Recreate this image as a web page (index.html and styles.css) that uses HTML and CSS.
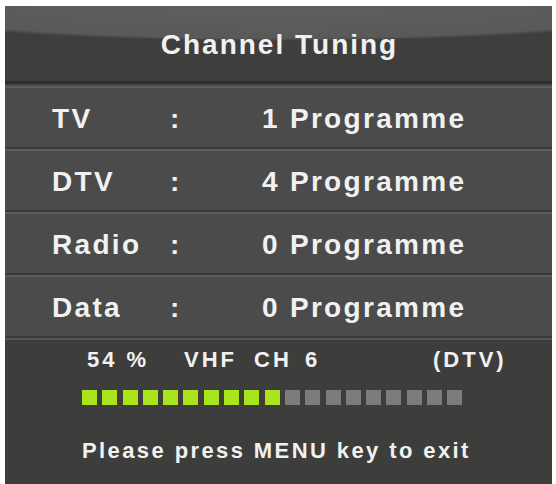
FILE: index.html
```
<!DOCTYPE html>
<html>
<head>
<meta charset="utf-8">
<link rel="stylesheet" href="styles.css">
</head>
<body>
<div class="panel">
  <div class="header"><span class="title">Channel Tuning</span></div>
  <div class="rows">
    <div class="row"><span class="label">TV</span><span class="colon">:</span><span class="value">1 Programme</span></div>
    <div class="row"><span class="label">DTV</span><span class="colon">:</span><span class="value">4 Programme</span></div>
    <div class="row"><span class="label">Radio</span><span class="colon">:</span><span class="value">0 Programme</span></div>
    <div class="row"><span class="label">Data</span><span class="colon">:</span><span class="value">0 Programme</span></div>
  </div>
  <div class="footer">
    <div class="status">
      <span class="s-pct">54 %</span>
      <span class="s-band">VHF</span>
      <span class="s-ch">CH</span>
      <span class="s-num">6</span>
      <span class="s-type">(DTV)</span>
    </div>
    <div class="bar">
      <span class="sq on"></span><span class="sq on"></span><span class="sq on"></span><span class="sq on"></span><span class="sq on"></span>
      <span class="sq on"></span><span class="sq on"></span><span class="sq on"></span><span class="sq on"></span><span class="sq on"></span>
      <span class="sq"></span><span class="sq"></span><span class="sq"></span><span class="sq"></span><span class="sq"></span>
      <span class="sq"></span><span class="sq"></span><span class="sq"></span><span class="sq"></span>
    </div>
    <div class="hint">Please press MENU key to exit</div>
  </div>
</div>
</body>
</html>
```
FILE: styles.css
```
html, body {
  margin: 0;
  padding: 0;
  background: #ffffff;
}
body {
  font-family: "Liberation Sans", Arial, sans-serif;
  font-weight: bold;
  color: #f1f1f1;
}
.panel {
  margin: 6px 0 0 5px;
  width: 547px;
  height: 478px;
  background: #3d3e3c;
  display: flex;
  flex-direction: column;
  overflow: hidden;
}
.header {
  box-sizing: border-box;
  height: 78px;
  border-bottom: 3px solid #2c2d2c;
  background:
    radial-gradient(420px 35px at 50% 0, #5e5f5e 0%, #585958 92%, #3e3f3d 100%);
  padding-top: 23px;
  text-align: center;
}
.title {
  font-size: 28px;
  line-height: 32px;
  letter-spacing: 2px;
  padding-left: 2px;
}
.rows {
  padding-top: 2px;
  background: #474847;
}
.row {
  box-sizing: border-box;
  height: 63px;
  border-top: 2px solid #5b5c5b;
  border-bottom: 2px solid #393a39;
  background: #4a4b4a;
  display: grid;
  grid-template-columns: 118px 92px auto;
  padding: 2px 0 0 47px;
  align-items: center;
  font-size: 28px;
  line-height: 57px;
  letter-spacing: 2.3px;
}
.footer {
  flex: 1;
  border-top: 2px solid #555655;
  background: #3d3e3c;
  padding-top: 8px;
}
.status {
  display: flex;
  padding-left: 82px;
  font-size: 22px;
  line-height: 24px;
  letter-spacing: 3px;
}
.s-pct { width: 97px; }
.s-band { width: 70px; }
.s-ch { width: 51px; }
.s-num { width: 128px; }
.bar {
  display: flex;
  gap: 5.3px;
  padding-left: 77px;
  margin-top: 18px;
  height: 15px;
}
.sq {
  width: 15px;
  height: 15px;
  background: #7c7d7b;
}
.sq.on {
  background: #a9e41f;
}
.hint {
  margin-top: 34px;
  padding-left: 77px;
  font-size: 22px;
  line-height: 24px;
  letter-spacing: 2.4px;
}
```
